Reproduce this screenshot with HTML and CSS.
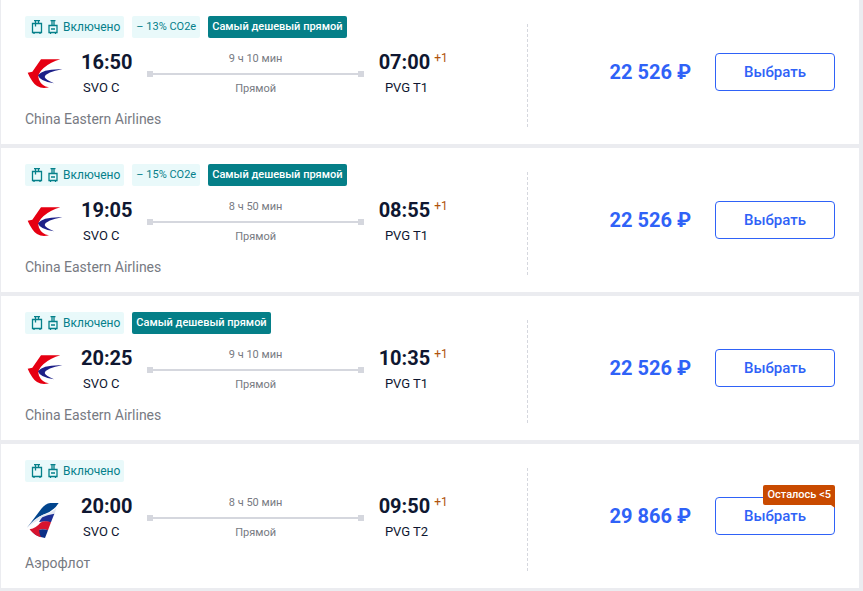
FILE: index.html
```html
<!DOCTYPE html>
<html lang="ru">
<head>
    <meta charset="UTF-8">
    <meta name="viewport" content="width=device-width, initial-scale=1.0">
    <title>Авиабилеты Москва – Шанхай</title>
    <link rel="stylesheet" href="styles.css">
</head>
<body>
    <!-- shared icons -->
    <svg class="sprite" aria-hidden="true">
        <symbol id="icon-suitcase" viewBox="0 0 12 14">
            <path d="M1.5 3.5h9v9h-9zM4.5 3.5v-3M7.5 3.5v-3M3 .6h6M4.5 3.5v3M3 12.5v1.5M9 12.5v1.5" fill="none" stroke="currentColor" stroke-width="1.3"/>
        </symbol>
        <symbol id="icon-carryon" viewBox="0 0 10 14">
            <path d="M1 5.5h8v7h-8zM4 5.5v-5M6 5.5v-5M2.5 .6h5M3 9h4M2.5 12.5v1.5M7.5 12.5v1.5" fill="none" stroke="currentColor" stroke-width="1.3"/>
        </symbol>
        <symbol id="logo-eastern" viewBox="0 0 120 120">
            <path d="M48 16h58Q78 23 55 43Q35 61 42 77Q50 96 72 100Q38 108 22 82Q13 68 8 56L22 53Z" fill="#e60012"/>
            <path d="M112 46Q53 44 39 64Q44 82 87 88Q62 77 59 69Q64 54 112 46Z" fill="#1d2088"/>
        </symbol>
        <symbol id="logo-aeroflot" viewBox="0 -6 120 120">
            <path d="M101 9H76Q61 11 49 26L6 83Q28 55 54 44Q86 34 101 9Z" fill="#02458d"/>
            <path d="M94 24Q80 40 54 44Q28 55 6 83Q26 66 48 56Q66 46 88 44Z" fill="#e3e8f2"/>
            <path d="M88 41Q66 44 52 52Q46 58 42 66Q60 62 78 67Z" fill="#1d2f94"/>
            <path d="M78 67Q60 60 46 68Q34 84 14 88L24 98Q46 82 69 91Z" fill="#d7142f"/>
            <path d="M69 91Q46 82 24 98Q32 108 60 114Z" fill="#0b2f86"/>
            <path d="M14 88Q30 92 44 78Q40 96 48 112Q30 108 14 88Z" fill="#d7142f"/>
        </symbol>
    </svg>

    <main class="flights">
        <article class="card">
            <div class="info">
                <div class="tags">
                    <span class="tag tag-baggage">
                        <svg class="icon" width="12" height="14"><use href="#icon-suitcase"/></svg>
                        <svg class="icon" width="10" height="14"><use href="#icon-carryon"/></svg>
                        Включено
                    </span>
                    <span class="tag">– 13% CO2e</span>
                    <span class="tag tag-best">Самый дешевый прямой</span>
                </div>
                <div class="route">
                    <svg class="logo" width="40" height="40"><use href="#logo-eastern"/></svg>
                    <div class="point">
                        <div class="time">16:50</div>
                        <div class="airport">SVO C</div>
                    </div>
                    <div class="path">
                        <div>9 ч 10 мин</div>
                        <div class="line"></div>
                        <div>Прямой</div>
                    </div>
                    <div class="point arrival">
                        <div class="time">07:00<sup class="day">+1</sup></div>
                        <div class="airport">PVG T1</div>
                    </div>
                </div>
                <div class="airline">China Eastern Airlines</div>
            </div>
            <div class="offer">
                <div class="price">22 526 ₽</div>
                <button class="select" type="button">Выбрать</button>
            </div>
        </article>

        <article class="card">
            <div class="info">
                <div class="tags">
                    <span class="tag tag-baggage">
                        <svg class="icon" width="12" height="14"><use href="#icon-suitcase"/></svg>
                        <svg class="icon" width="10" height="14"><use href="#icon-carryon"/></svg>
                        Включено
                    </span>
                    <span class="tag">– 15% CO2e</span>
                    <span class="tag tag-best">Самый дешевый прямой</span>
                </div>
                <div class="route">
                    <svg class="logo" width="40" height="40"><use href="#logo-eastern"/></svg>
                    <div class="point">
                        <div class="time">19:05</div>
                        <div class="airport">SVO C</div>
                    </div>
                    <div class="path">
                        <div>8 ч 50 мин</div>
                        <div class="line"></div>
                        <div>Прямой</div>
                    </div>
                    <div class="point arrival">
                        <div class="time">08:55<sup class="day">+1</sup></div>
                        <div class="airport">PVG T1</div>
                    </div>
                </div>
                <div class="airline">China Eastern Airlines</div>
            </div>
            <div class="offer">
                <div class="price">22 526 ₽</div>
                <button class="select" type="button">Выбрать</button>
            </div>
        </article>

        <article class="card">
            <div class="info">
                <div class="tags">
                    <span class="tag tag-baggage">
                        <svg class="icon" width="12" height="14"><use href="#icon-suitcase"/></svg>
                        <svg class="icon" width="10" height="14"><use href="#icon-carryon"/></svg>
                        Включено
                    </span>
                    <span class="tag tag-best">Самый дешевый прямой</span>
                </div>
                <div class="route">
                    <svg class="logo" width="40" height="40"><use href="#logo-eastern"/></svg>
                    <div class="point">
                        <div class="time">20:25</div>
                        <div class="airport">SVO C</div>
                    </div>
                    <div class="path">
                        <div>9 ч 10 мин</div>
                        <div class="line"></div>
                        <div>Прямой</div>
                    </div>
                    <div class="point arrival">
                        <div class="time">10:35<sup class="day">+1</sup></div>
                        <div class="airport">PVG T1</div>
                    </div>
                </div>
                <div class="airline">China Eastern Airlines</div>
            </div>
            <div class="offer">
                <div class="price">22 526 ₽</div>
                <button class="select" type="button">Выбрать</button>
            </div>
        </article>

        <article class="card">
            <div class="info">
                <div class="tags">
                    <span class="tag tag-baggage">
                        <svg class="icon" width="12" height="14"><use href="#icon-suitcase"/></svg>
                        <svg class="icon" width="10" height="14"><use href="#icon-carryon"/></svg>
                        Включено
                    </span>
                </div>
                <div class="route">
                    <svg class="logo" width="40" height="40"><use href="#logo-aeroflot"/></svg>
                    <div class="point">
                        <div class="time">20:00</div>
                        <div class="airport">SVO C</div>
                    </div>
                    <div class="path">
                        <div>8 ч 50 мин</div>
                        <div class="line"></div>
                        <div>Прямой</div>
                    </div>
                    <div class="point arrival">
                        <div class="time">09:50<sup class="day">+1</sup></div>
                        <div class="airport">PVG T2</div>
                    </div>
                </div>
                <div class="airline">Аэрофлот</div>
            </div>
            <div class="offer">
                <div class="price">29 866 ₽</div>
                <div class="action">
                    <button class="select" type="button">Выбрать</button>
                    <span class="seats">Осталось &lt;5</span>
                </div>
            </div>
        </article>
    </main>
</body>
</html>
```

FILE: styles.css
```css
* {
    box-sizing: border-box;
}

body {
    margin: 0;
    padding: 0 4px 0 1px;
    background-color: #ebecf0;
    font-family: Roboto, "Liberation Sans", sans-serif;
    font-size: 14px;
    color: #0f1731;
}

.sprite {
    position: absolute;
    width: 0;
    height: 0;
}

.flights {
    display: flex;
    flex-direction: column;
    gap: 4px;
    padding-bottom: 3px;
}

.card {
    display: grid;
    grid-template-columns: 62fr 38fr;
    padding: 16px 24px;
    background-color: #fff;
}

.tags {
    display: flex;
    gap: 8px;
}

.tag {
    display: flex;
    align-items: center;
    padding: 0 4px;
    border-radius: 2px;
    background-color: #e9f9fa;
    color: #05808a;
    font-size: 11px;
    line-height: 22px;
}

.tag-baggage {
    gap: 5px;
    padding-left: 6px;
    font-size: 12px;
}

.tag-best {
    background-color: #057f88;
    color: #fff;
    font-weight: 500;
}

.route {
    display: flex;
    align-items: center;
    margin: 9px 97px 9px 0;
}

.logo {
    margin-right: 16px;
}

.point {
    width: 66px;
}

.arrival {
    text-align: right;
}

.time {
    position: relative;
    font-size: 20px;
    font-weight: 700;
    line-height: 28px;
}

.day {
    position: absolute;
    top: 0;
    left: 100%;
    margin-left: 4px;
    color: #b0530c;
    font-size: 12px;
    font-weight: 400;
    line-height: 20px;
}

.airport {
    padding: 0 2px;
    font-size: 13px;
    line-height: 24px;
}

.path {
    flex: 1;
    color: #777a82;
    font-size: 11px;
    line-height: 24px;
    text-align: center;
}

.line {
    display: flex;
    align-items: center;
    justify-content: space-between;
    height: 6px;
    background: linear-gradient(#d5d7de, #d5d7de) center / 100% 2px no-repeat;
}

.line::before,
.line::after {
    content: "";
    width: 6px;
    height: 6px;
    background-color: #d5d7de;
}

.airline {
    color: #777a82;
    line-height: 18px;
}

.offer {
    display: flex;
    align-items: center;
    justify-content: flex-end;
    gap: 24px;
    height: 104px;
    margin-top: 8px;
    padding-bottom: 8px;
    background: repeating-linear-gradient(#d5d7de 0 3px, #fff 3px 5px) left / 1px 100% no-repeat;
}

.price {
    color: #2f62f7;
    font-size: 20px;
    font-weight: 700;
    line-height: 28px;
}

.select {
    display: block;
    width: 120px;
    height: 38px;
    padding: 0;
    border: 1px solid #2f62f7;
    border-radius: 4px;
    background-color: #fff;
    color: #2f62f7;
    font-family: inherit;
    font-size: 15px;
    font-weight: 500;
    cursor: pointer;
}

.select:hover {
    background-color: #f0f4ff;
}

.action {
    position: relative;
}

.seats {
    position: absolute;
    top: -12px;
    right: 0;
    padding: 0 4px;
    border-radius: 2px 2px 0 2px;
    background-color: #c94a00;
    color: #fff;
    font-size: 11px;
    font-weight: 500;
    line-height: 20px;
    white-space: nowrap;
}

.seats::after {
    content: "";
    position: absolute;
    top: 100%;
    right: 0;
    border-top: 3px solid #c94a00;
    border-left: 4px solid transparent;
}
```
